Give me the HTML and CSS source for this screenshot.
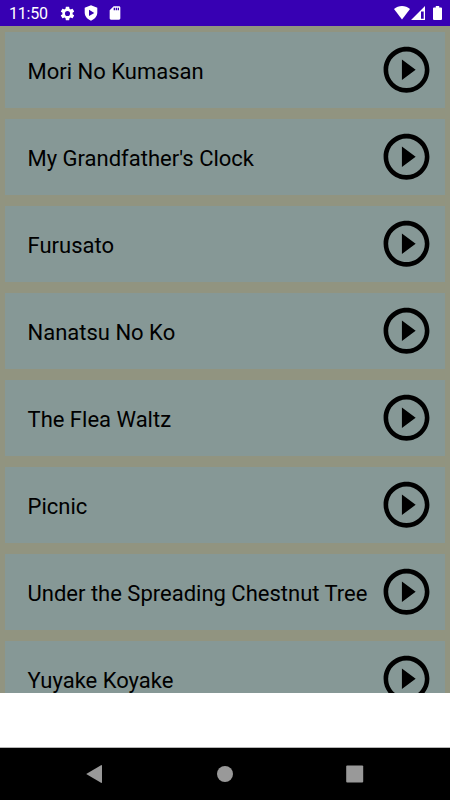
FILE: index.html
```html
<!DOCTYPE html>
<html lang="en">
<head>
<meta charset="utf-8">
<title>Songs</title>
<link rel="stylesheet" href="styles.css">
</head>
<body>
<svg width="0" height="0" class="defs"><symbol id="play" viewBox="0 -0.12 24 24"><path d="M10 16.5l6-4.5-6-4.5v9zM12 2C6.48 2 2 6.48 2 12s4.480 10 10 10 10-4.480 10-10S17.520 2 12 2zm0 18c-4.410 0-8-3.590-8-8s3.590-8 8-8 8 3.590 8 8-3.590 8-8 8z"/></symbol></svg>
<header class="status">
  <span class="time">11:50</span>
  <svg class="gear" viewBox="0 0 24 24"><path fill-rule="evenodd" d="M19.140 12.940c.04-.3.060-.61.060-.94 0-.32-.02-.64-.07-.94l2.030-1.580a.49.49 0 0 0 .12-.61l-1.920-3.320a.488.488 0 0 0-.59-.22l-2.390.96c-.5-.38-1.030-.7-1.620-.94l-.36-2.540a.484.484 0 0 0-.48-.41h-3.840c-.24 0-.43.17-.47.41l-.36 2.540c-.59.24-1.130.57-1.620.94l-2.390-.96c-.22-.08-.47 0-.59.22L2.740 8.870c-.12.21-.08.47.12.61l2.030 1.580c-.05.3-.09.63-.09.94s.02.64.07.94l-2.030 1.580a.49.49 0 0 0-.12.61l1.920 3.320c.12.22.37.29.59.22l2.390-.96c.5.38 1.030.7 1.620.94l.36 2.540c.05.24.24.41.48.41h3.840c.24 0 .44-.17.47-.41l.36-2.540c.59-.24 1.130-.56 1.620-.94l2.390.96c.22.08.47 0 .59-.22l1.920-3.320c.12-.22.07-.47-.12-.61l-2.010-1.580zM12 15.600a3.600 3.600 0 1 1 0-7.200 3.600 3.600 0 0 1 0 7.200z"/></svg>
  <svg class="shield" viewBox="0 0 14 16"><path fill-rule="evenodd" d="M7 .3L13.300 2.700v4.800c0 3.700-2.700 6.800-6.300 8.200C3.400 14.300.7 11.200.7 7.500V2.700zM5 4.700v6.400L10.300 7.900z"/></svg>
  <svg class="sd" viewBox="0 0 24 24"><path d="M18 2h-8L4.020 8 4 20c0 1.100.9 2 2 2h12c1.100 0 2-.9 2-2V4c0-1.100-.9-2-2-2zm-6 6h-2V4h2v4zm3 0h-2V4h2v4zm3 0h-2V4h2v4z"/></svg>
  <span class="spacer"></span>
  <svg class="wifi" viewBox="0 0 16 14"><path d="M0 3.100C4.500-.9 11.500-.9 16 3.100L8 13.600z"/></svg>
  <svg class="signal" viewBox="0 0 14 14"><path fill-rule="evenodd" d="M0 14L14 0v14zM10 5.500v7.300h2.700V5.500z"/></svg>
  <svg class="battery" viewBox="0 0 9 14"><path d="M2.800 0h3.400v1.500H8q1 0 1 1V13q0 1-1 1H1q-1 0-1-1V2.500q0-1 1-1h1.800z"/></svg>
</header>
<main class="list">
  <div class="card"><span>Mori No Kumasan</span><svg class="play"><use href="#play"/></svg></div>
  <div class="card"><span>My Grandfather's Clock</span><svg class="play"><use href="#play"/></svg></div>
  <div class="card"><span>Furusato</span><svg class="play"><use href="#play"/></svg></div>
  <div class="card"><span>Nanatsu No Ko</span><svg class="play"><use href="#play"/></svg></div>
  <div class="card"><span>The Flea Waltz</span><svg class="play"><use href="#play"/></svg></div>
  <div class="card"><span>Picnic</span><svg class="play"><use href="#play"/></svg></div>
  <div class="card"><span>Under the Spreading Chestnut Tree</span><svg class="play"><use href="#play"/></svg></div>
  <div class="card"><span>Yuyake Koyake</span><svg class="play"><use href="#play"/></svg></div>
</main>
<div class="blank"></div>
<nav class="nav">
  <svg viewBox="0 0 20 20"><path d="M1.200 10L16 1.200q1-.5 1 .6v16.400q0 1.100-1 .6z"/></svg>
  <svg viewBox="0 0 20 20"><circle cx="10" cy="10" r="8"/></svg>
  <svg viewBox="0 0 20 20"><rect x="1.200" y="1.500" width="17" height="17" rx="1"/></svg>
</nav>
</body>
</html>
```

FILE: styles.css
```css
* { box-sizing: border-box; }
body {
  margin: 0;
  width: 450px;
  height: 800px;
  overflow: hidden;
  display: flex;
  flex-direction: column;
  background: #fff;
  font-family: Roboto, sans-serif;
}
.defs { position: absolute; }
.status {
  height: 26px;
  flex: none;
  display: flex;
  align-items: center;
  padding: 0 8px 0 9px;
  background: #3700b3;
  color: #fff;
  fill: #fff;
}
.time { font-size: 16px; line-height: 24px; width: 50px; padding-top: 2px; letter-spacing: -0.200px; }
.gear { width: 17px; height: 17px; }
.shield { width: 14px; height: 16px; margin-left: 8px; }
.sd { width: 16px; height: 16px; margin-left: 9px; }
.spacer { flex: 1; }
.wifi { width: 16px; height: 14px; }
.signal { width: 14px; height: 14px; margin-left: 1px; }
.battery { width: 9px; height: 14px; margin-left: 8px; }
.list {
  height: 667px;
  flex: none;
  overflow: hidden;
  display: flex;
  flex-direction: column;
  gap: 11px;
  padding: 6px 5px 0;
  background: #919480;
}
.card {
  height: 76px;
  flex: none;
  display: flex;
  align-items: center;
  justify-content: space-between;
  padding: 0 11px 0 22.500px;
  background: #869896;
  color: #000;
  font-size: 22px;
  white-space: nowrap;
}
.card span { padding-top: 2px; }
.play { width: 55px; height: 55px; flex: none; margin-bottom: 1px; }
.blank { flex: 1; border-bottom: 1px solid #b5b5b5; }
.nav {
  height: 52px;
  flex: none;
  display: flex;
  align-items: center;
  justify-content: space-between;
  padding: 0 85px 0 84.500px;
  background: #000;
  fill: #999;
}
.nav svg { width: 20px; height: 20px; }
```
